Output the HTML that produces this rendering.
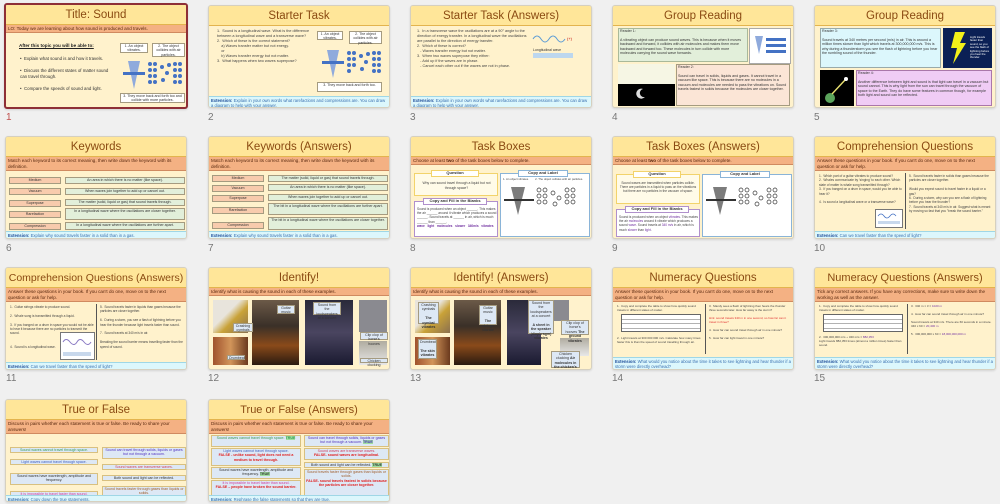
<!DOCTYPE html>
<html><head><meta charset="utf-8"><style>
*{margin:0;padding:0;box-sizing:border-box}
body{width:1000px;height:504px;background:#f0f0f0;font-family:"Liberation Sans",sans-serif;position:relative;overflow:hidden}
.s{position:absolute;width:182px;height:103px;background:#fff2cc;border:1px solid #d6d0bf;border-radius:3px;overflow:hidden;box-shadow:0 1px 2px rgba(0,0,0,.12)}
.sel{border:2px solid #8e2f36}
.t{position:absolute;left:0;top:0;width:100%;height:20px;background:#ffe699;border-bottom:1px solid #e3b44e;color:#8a4a12;font-size:11.5px;text-align:center;line-height:20px}
.sub{position:absolute;left:0;width:100%;background:#f4b183;color:#5a2a10;font-size:4.6px;line-height:5.6px;padding:1px 2px;border-bottom:1px solid #d08a60}
.ext{position:absolute;left:0;bottom:0;width:100%;background:#dcf7fc;border-top:1px solid #9fd7e6;color:#3a70b0;font-size:4.2px;line-height:5px;padding:1px 2px}
.ext b{color:#1f4e9a}
.n{position:absolute;font-size:10px;color:#777}
.tx{position:absolute;font-size:3.8px;line-height:5px;color:#444}
.bx{position:absolute;border:1px solid #a59b80;font-size:3.6px;line-height:4.4px;text-align:center;color:#333;padding:0 1px}
.pk{background:#f8cbad}.gr{background:#e2efda}.bl{background:#dde8f5}
.img{position:absolute}
.dot{position:absolute;width:4px;height:4px;border-radius:50%;background:#4472c4}
</style></head><body>

<!-- Row 1 -->
<div class="s sel" style="left:4px;top:3px;width:184px;height:106px">
 <div class="t" style="height:20px">Title: Sound</div>
 <div class="sub" style="top:20px;height:8px;background:#f4b183">LO: Today we are learning about how sound is produced and travels.</div>
 <div class="tx" style="left:13px;top:38px;font-size:4.6px;font-weight:bold;text-decoration:underline;color:#222">After this topic you will be able to:</div>
 <div class="tx" style="left:14px;top:51px;font-size:4.4px;line-height:6px;width:95px;color:#333">•&nbsp; Explain what sound is and how it travels.<br><br>•&nbsp; Discuss the different states of matter sound can travel through.<br><br>•&nbsp; Compare the speeds of sound and light.</div>
 <div class="bx" style="left:114px;top:38px;width:28px;height:10px;background:#fff">1. An object vibrates.</div>
 <div class="bx" style="left:146px;top:38px;width:33px;height:14px;background:#fff">2. The object collides with air particles.</div>
 <div class="bx" style="left:114px;top:88px;width:65px;height:10px;background:#fff">3. They move back and forth too and collide with more particles.</div>
 <svg class="img" style="left:116px;top:54px" width="64" height="32"><polygon points="6,2 18,2 12,30" fill="#8faadc"/><rect x="1" y="13" width="22" height="3" fill="#4472c4"/>
 <g fill="#4472c4"><circle cx="28" cy="5" r="2"/><circle cx="33" cy="5" r="2"/><circle cx="28" cy="11" r="2"/><circle cx="33" cy="11" r="2"/><circle cx="28" cy="17" r="2"/><circle cx="33" cy="17" r="2"/><circle cx="28" cy="23" r="2"/><circle cx="33" cy="23" r="2"/><circle cx="40" cy="8" r="2"/><circle cx="45" cy="14" r="2"/><circle cx="41" cy="21" r="2"/><circle cx="47" cy="6" r="2"/><circle cx="53" cy="5" r="2"/><circle cx="58" cy="5" r="2"/><circle cx="53" cy="11" r="2"/><circle cx="58" cy="11" r="2"/><circle cx="53" cy="17" r="2"/><circle cx="58" cy="17" r="2"/><circle cx="53" cy="23" r="2"/><circle cx="58" cy="23" r="2"/></g></svg>
</div>
<div class="n" style="left:6px;top:112px;color:#c0504d">1</div>

<div class="s" style="left:208px;top:5px">
 <div class="t">Starter Task</div>
 <div class="tx" style="left:8px;top:23px;width:105px">1.&nbsp; Sound is a longitudinal wave. What is the difference between a longitudinal wave and a transverse wave?<br>2.&nbsp; Which of these is the correct statement?<br>&nbsp;&nbsp;&nbsp;&nbsp;a) Waves transfer matter but not energy.<br>&nbsp;&nbsp;&nbsp;&nbsp;or<br>&nbsp;&nbsp;&nbsp;&nbsp;b) Waves transfer energy but not matter.<br>3.&nbsp; What happens when two waves superpose?</div>
 <div class="bx" style="left:108px;top:25px;width:26px;height:9px;background:#fff">1. An object vibrates.</div>
 <div class="bx" style="left:140px;top:25px;width:33px;height:13px;background:#fff">2. The object collides with air particles.</div>
 <div class="bx" style="left:108px;top:76px;width:65px;height:10px;background:#fff">3. They move back and forth too.</div>
 <svg class="img" style="left:112px;top:42px" width="64" height="32"><polygon points="6,2 18,2 12,30" fill="#8faadc"/><rect x="1" y="13" width="22" height="3" fill="#4472c4"/>
 <g fill="#4472c4"><circle cx="28" cy="5" r="2"/><circle cx="33" cy="5" r="2"/><circle cx="28" cy="11" r="2"/><circle cx="33" cy="11" r="2"/><circle cx="28" cy="17" r="2"/><circle cx="33" cy="17" r="2"/><circle cx="28" cy="23" r="2"/><circle cx="40" cy="8" r="2"/><circle cx="45" cy="14" r="2"/><circle cx="41" cy="21" r="2"/><circle cx="47" cy="6" r="2"/><circle cx="53" cy="5" r="2"/><circle cx="58" cy="5" r="2"/><circle cx="53" cy="11" r="2"/><circle cx="58" cy="11" r="2"/><circle cx="53" cy="17" r="2"/><circle cx="58" cy="17" r="2"/><circle cx="53" cy="23" r="2"/><circle cx="58" cy="23" r="2"/></g></svg>
 <div class="ext" style="height:11px"><b>Extension:</b> Explain in your own words what rarefactions and compressions are. You can draw a diagram to help with your answer.</div>
</div>
<div class="n" style="left:208px;top:112px">2</div>

<div class="s" style="left:410px;top:5px">
 <div class="t">Starter Task (Answers)</div>
 <div class="tx" style="left:6px;top:23px;width:110px">1.&nbsp; In a transverse wave the oscillations are at a 90° angle to the direction of energy transfer. In a longitudinal wave the oscillations are parallel to the direction of energy transfer.<br>2.&nbsp; Which of these is correct?<br>&nbsp;&nbsp;&nbsp;- Waves transfer energy but not matter.<br>3.&nbsp; When two waves superpose they either:<br>&nbsp;&nbsp;&nbsp;- Add up if the waves are in phase.<br>&nbsp;&nbsp;&nbsp;- Cancel each other out if the waves are not in phase.</div>
 <svg class="img" style="left:120px;top:25px" width="58" height="40"><path d="M2 8 q4 -6 8 0 t8 0 t8 0 t8 0" stroke="#5b9bd5" fill="none"/><text x="36" y="9" font-size="4" fill="#c00000">(+)</text><rect x="2" y="22" width="40" height="5" fill="#bdd7ee"/><text x="2" y="20" font-size="3.5" fill="#333">Longitudinal wave</text></svg>
 <div class="ext" style="height:11px"><b>Extension:</b> Explain in your own words what rarefactions and compressions are. You can draw a diagram to help with your answer.</div>
</div>
<div class="n" style="left:410px;top:112px">3</div>

<div class="s" style="left:612px;top:5px">
 <div class="t">Group Reading</div>
 <div class="bx gr" style="left:5px;top:22px;width:130px;height:34px;text-align:left;border-color:#a9b99a">Reader 1:<br><br>A vibrating object can produce sound waves. This is because when it moves backward and forward, it collides with air molecules and makes them move backward and forward too. These molecules in turn collide with more molecules carrying the sound wave forwards.</div>
 <div class="img" style="left:136px;top:22px;width:42px;height:36px;background:#fff;border:1px solid #aaa"></div>
 <svg class="img" style="left:138px;top:30px" width="38" height="20"><polygon points="4,0 12,0 8,18" fill="#8faadc"/><g fill="#4472c4"><rect x="15" y="2" width="20" height="3"/><rect x="15" y="8" width="20" height="3"/><rect x="15" y="14" width="20" height="3"/></g></svg>
 <div class="img" style="left:5px;top:58px;width:57px;height:42px;background:#000"><div style="height:20px;background:#f6f6e4"></div></div>
 <svg class="img" style="left:22px;top:82px" width="12" height="12"><path d="M8 1 A5 5 0 1 0 10 9 A4 4 0 1 1 8 1z" fill="#ddd"/></svg>
 <div class="bx pk" style="left:63px;top:58px;width:114px;height:42px;text-align:left;background:#fbe5d6">Reader 2:<br><br>Sound can travel in solids, liquids and gases. It cannot travel in a vacuum like space. This is because there are no molecules in a vacuum and molecules are needed to pass the vibrations on. Sound travels fastest in solids because the molecules are closer together.</div>
</div>
<div class="n" style="left:612px;top:112px">4</div>

<div class="s" style="left:814px;top:5px">
 <div class="t">Group Reading</div>
 <div class="bx" style="left:5px;top:22px;width:121px;height:40px;text-align:left;background:#dcf7fc;border-color:#9aa">Reader 3:<br><br>Sound travels at 340 metres per second (m/s) in air. This is around a million times slower than light which travels at 300,000,000 m/s. This is why during a thunderstorm you see the flash of lightning before you hear the rumbling sound of the thunder.</div>
 <div class="img" style="left:128px;top:22px;width:49px;height:40px;background:#0b2055"></div>
 <svg class="img" style="left:134px;top:26px" width="20" height="32"><polygon points="6,0 16,0 11,11 17,11 4,32 8,16 2,16" fill="#f3f019"/></svg>
 <div class="tx" style="left:155px;top:30px;width:20px;font-size:2.8px;line-height:3.4px;color:#fff">Light travels faster than sound, so you see the flash of lightning before you hear the thunder.</div>
 <div class="img" style="left:5px;top:64px;width:34px;height:36px;background:#000"></div>
 <svg class="img" style="left:8px;top:68px" width="30" height="30"><circle cx="7" cy="24" r="5" fill="#5ba35b"/><line x1="9" y1="20" x2="22" y2="6" stroke="#e8e070" stroke-width="1.4"/><circle cx="23" cy="5" r="2" fill="#fff"/></svg>
 <div class="bx" style="left:41px;top:64px;width:136px;height:36px;text-align:left;background:#f0ccf5;border-color:#a7a">Reader 4:<br><br>Another difference between light and sound is that light can travel in a vacuum but sound cannot. This is why light from the sun can travel through the vacuum of space to the Earth. They do have some features in common though, for example both light and sound can be reflected.</div>
</div>
<div class="n" style="left:814px;top:112px">5</div>

<!-- Row 2 -->
<div class="s" style="left:5px;top:136px">
 <div class="t">Keywords</div>
 <div class="sub" style="top:20px;height:14px">Match each keyword to its correct meaning, then write down the keyword with its definition.</div>
 <div class="bx pk" style="left:3px;top:40px;width:52px;height:7px">Medium</div>
 <div class="bx pk" style="left:3px;top:51px;width:52px;height:7px">Vacuum</div>
 <div class="bx pk" style="left:3px;top:63px;width:52px;height:7px">Superpose</div>
 <div class="bx pk" style="left:3px;top:74px;width:52px;height:7px">Rarefaction</div>
 <div class="bx pk" style="left:3px;top:86px;width:52px;height:7px">Compression</div>
 <div class="bx gr" style="left:59px;top:40px;width:120px;height:7px">An area in which there is no matter (like space).</div>
 <div class="bx gr" style="left:59px;top:51px;width:120px;height:7px">When waves join together to add up or cancel out.</div>
 <div class="bx gr" style="left:59px;top:62px;width:120px;height:7px">The matter (solid, liquid or gas) that sound travels through.</div>
 <div class="bx gr" style="left:59px;top:71px;width:120px;height:12px">In a longitudinal wave where the oscillations are closer together.</div>
 <div class="bx gr" style="left:59px;top:85px;width:120px;height:8px">In a longitudinal wave where the oscillations are further apart.</div>
 <div class="ext" style="height:7px"><b>Extension:</b> Explain why sound travels faster in a solid than in a gas.</div>
</div>
<div class="n" style="left:6px;top:243px">6</div>

<div class="s" style="left:208px;top:136px">
 <div class="t">Keywords (Answers)</div>
 <div class="sub" style="top:20px;height:14px">Match each keyword to its correct meaning, then write down the keyword with its definition.</div>
 <div class="bx pk" style="left:3px;top:38px;width:52px;height:7px">Medium</div>
 <div class="bx pk" style="left:3px;top:48px;width:52px;height:7px">Vacuum</div>
 <div class="bx pk" style="left:3px;top:58px;width:52px;height:7px">Superpose</div>
 <div class="bx pk" style="left:3px;top:70px;width:52px;height:7px">Rarefaction</div>
 <div class="bx pk" style="left:3px;top:85px;width:52px;height:7px">Compression</div>
 <div class="bx gr" style="left:59px;top:38px;width:120px;height:7px">The matter (solid, liquid or gas) that sound travels through.</div>
 <div class="bx gr" style="left:59px;top:47px;width:120px;height:7px">An area in which there is no matter (like space).</div>
 <div class="bx gr" style="left:59px;top:57px;width:120px;height:7px">When waves join together to add up or cancel out.</div>
 <div class="bx gr" style="left:59px;top:66px;width:120px;height:12px">The bit in a longitudinal wave where the oscillations are further apart.</div>
 <div class="bx gr" style="left:59px;top:80px;width:120px;height:13px">The bit in a longitudinal wave where the oscillations are closer together.</div>
 <div class="ext" style="height:7px"><b>Extension:</b> Explain why sound travels faster in a solid than in a gas.</div>
</div>
<div class="n" style="left:208px;top:243px">7</div>

<div class="s" style="left:410px;top:136px">
 <div class="t">Task Boxes</div>
 <div class="sub" style="top:20px;height:8px">Choose at least <b>two</b> of the task boxes below to complete.</div>
 <div class="img" style="left:3px;top:36px;width:84px;height:23px;border:1px solid #f2d36b;background:#fffbe8"></div>
 <div class="bx" style="left:20px;top:33px;width:48px;height:7px;background:#fff;border-color:#f2d36b;font-weight:bold;font-size:4px">Question</div>
 <div class="tx" style="left:8px;top:44px;width:75px;text-align:center;font-size:3.4px">Why can sound travel through a liquid but not through space?</div>
 <div class="img" style="left:3px;top:64px;width:84px;height:36px;border:1px solid #b090cc;background:#fff"></div>
 <div class="bx" style="left:12px;top:61px;width:64px;height:7px;background:#fff;border-color:#b090cc;font-weight:bold;font-size:4px">Copy and Fill in the Blanks</div>
 <div class="tx" style="left:6px;top:70px;width:80px;font-size:3.2px;line-height:4.2px">Sound is produced when an object ______. This makes the air ______ around it vibrate which produces a sound ______. Sound travels at ______ in air, which is much ______ than ______.<br><span style="color:#7030a0;font-weight:bold">wave &nbsp; light &nbsp; molecules &nbsp; slower &nbsp; 340m/s &nbsp; vibrates</span></div>
 <div class="img" style="left:89px;top:36px;width:90px;height:64px;border:1px solid #8ab4d8;background:#fff"></div>
 <div class="bx" style="left:107px;top:33px;width:50px;height:7px;background:#fff;border-color:#8ab4d8;font-weight:bold;font-size:4px">Copy and Label</div>
 <svg class="img" style="left:92px;top:48px" width="84" height="40"><polygon points="8,2 22,2 15,30" fill="#444" opacity=".7"/><rect x="1" y="14" width="30" height="2" fill="#333"/><g fill="none" stroke="#333" stroke-width=".7"><circle cx="36" cy="5" r="2"/><circle cx="42" cy="5" r="2"/><circle cx="36" cy="11" r="2"/><circle cx="42" cy="11" r="2"/><circle cx="36" cy="17" r="2"/><circle cx="42" cy="17" r="2"/><circle cx="50" cy="8" r="2"/><circle cx="56" cy="13" r="2"/><circle cx="52" cy="19" r="2"/><circle cx="64" cy="5" r="2"/><circle cx="70" cy="5" r="2"/><circle cx="64" cy="11" r="2"/><circle cx="70" cy="11" r="2"/><circle cx="64" cy="17" r="2"/><circle cx="70" cy="17" r="2"/></g></svg>
 <div class="tx" style="left:92px;top:40px;font-size:2.8px;width:84px">1. An object vibrates. &nbsp;&nbsp;&nbsp;&nbsp;&nbsp;&nbsp; 2. The object collides with air particles.</div>
</div>
<div class="n" style="left:410px;top:243px">8</div>

<div class="s" style="left:612px;top:136px">
 <div class="t">Task Boxes (Answers)</div>
 <div class="sub" style="top:20px;height:8px">Choose at least <b>two</b> of the task boxes below to complete.</div>
 <div class="img" style="left:3px;top:37px;width:84px;height:30px;border:1px solid #f2d36b;background:#fffbe8"></div>
 <div class="bx" style="left:20px;top:34px;width:48px;height:7px;background:#fff;border-color:#f2d36b;font-weight:bold;font-size:4px">Question</div>
 <div class="tx" style="left:6px;top:44px;width:78px;text-align:center;font-size:3.2px;line-height:4.2px">Sound waves are transmitted when particles collide. There are particles in a liquid to pass on the vibrations but there are no particles in the vacuum of space.</div>
 <div class="img" style="left:3px;top:72px;width:84px;height:28px;border:1px solid #b090cc;background:#fff"></div>
 <div class="bx" style="left:12px;top:69px;width:64px;height:7px;background:#fff;border-color:#b090cc;font-weight:bold;font-size:4px">Copy and Fill in the Blanks</div>
 <div class="tx" style="left:6px;top:78px;width:80px;font-size:3.2px;line-height:4.2px">Sound is produced when an object <span style="color:#7030a0">vibrates</span>. This makes the air <span style="color:#7030a0">molecules</span> around it vibrate which produces a sound <span style="color:#7030a0">wave</span>. Sound travels at <span style="color:#7030a0">340 m/s</span> in air, which is much <span style="color:#7030a0">slower</span> than <span style="color:#7030a0">light</span>.</div>
 <div class="img" style="left:89px;top:37px;width:90px;height:63px;border:1px solid #8ab4d8;background:#fff"></div>
 <div class="bx" style="left:107px;top:34px;width:50px;height:7px;background:#fff;border-color:#8ab4d8;font-weight:bold;font-size:4px">Copy and Label</div>
 <svg class="img" style="left:92px;top:48px" width="84" height="40"><polygon points="8,2 22,2 15,30" fill="#444" opacity=".7"/><rect x="1" y="14" width="30" height="2" fill="#333"/><g fill="none" stroke="#333" stroke-width=".7"><circle cx="36" cy="5" r="2"/><circle cx="42" cy="5" r="2"/><circle cx="36" cy="11" r="2"/><circle cx="42" cy="11" r="2"/><circle cx="36" cy="17" r="2"/><circle cx="42" cy="17" r="2"/><circle cx="50" cy="8" r="2"/><circle cx="56" cy="13" r="2"/><circle cx="52" cy="19" r="2"/><circle cx="64" cy="5" r="2"/><circle cx="70" cy="5" r="2"/><circle cx="64" cy="11" r="2"/><circle cx="70" cy="11" r="2"/><circle cx="64" cy="17" r="2"/><circle cx="70" cy="17" r="2"/></g></svg>
</div>
<div class="n" style="left:612px;top:243px">9</div>

<div class="s" style="left:814px;top:136px">
 <div class="t">Comprehension Questions</div>
 <div class="sub" style="top:20px;height:14px">Answer these questions in your book. If you can't do one, move on to the next question or ask for help.</div>
 <div class="tx" style="left:4px;top:37px;width:85px;font-size:3.2px;line-height:4.4px">1.&nbsp; Which part of a guitar vibrates to produce sound?<br>2.&nbsp; Whales communicate by 'singing' to each other. Which state of matter is whale song transmitted through?<br>3.&nbsp; If you banged on a drum in space, would you be able to hear it?<br><br>4.&nbsp; Is sound a longitudinal wave or a transverse wave?</div>
 <div class="img" style="left:90px;top:36px;width:1px;height:56px;background:#555"></div>
 <div class="bx" style="left:60px;top:72px;width:28px;height:19px;background:#fff;border-color:#777"></div>
 <svg class="img" style="left:62px;top:75px" width="24" height="14"><path d="M1 4 q3 -4 6 0 t6 0 t6 0" stroke="#4472c4" fill="none" stroke-width=".8"/><rect x="1" y="9" width="22" height="3" fill="#c8d8ec"/></svg>
 <div class="tx" style="left:94px;top:37px;width:84px;font-size:3.2px;line-height:4.4px">5.&nbsp; Sound travels faster in solids than gases because the particles are closer together.<br><br>Would you expect sound to travel faster in a liquid or a gas?<br>6.&nbsp; During a storm, why can you see a flash of lightning before you hear the thunder?<br>7.&nbsp; Sound travels at 340 m/s in air. Suggest what is meant by moving so fast that you "break the sound barrier."</div>
 <div class="ext" style="height:7px"><b>Extension:</b> Can we travel faster than the speed of light?</div>
</div>
<div class="n" style="left:814px;top:243px">10</div>

<!-- Row 3 -->
<div class="s" style="left:5px;top:267px">
 <div class="t" style="font-size:10.5px">Comprehension Questions (Answers)</div>
 <div class="sub" style="top:20px;height:14px">Answer these questions in your book. If you can't do one, move on to the next question or ask for help.</div>
 <div class="tx" style="left:4px;top:37px;width:85px;font-size:3.2px;line-height:4.4px">1.&nbsp; Guitar strings vibrate to produce sound.<br><br>2.&nbsp; Whale song is transmitted through a liquid.<br><br>3.&nbsp; If you banged on a drum in space you would not be able to hear it because there are no particles to transmit the sound.<br><br><br>4.&nbsp; Sound is a longitudinal wave.</div>
 <div class="img" style="left:90px;top:36px;width:1px;height:56px;background:#555"></div>
 <div class="bx" style="left:54px;top:64px;width:35px;height:28px;background:#fff;border-color:#777"></div>
 <svg class="img" style="left:56px;top:68px" width="30" height="22"><path d="M1 6 q3 -5 7 0 t7 0 t7 0 t7 0" stroke="#8a7ac4" fill="none"/><rect x="1" y="16" width="28" height="4" fill="#c8d8ec"/></svg>
 <div class="tx" style="left:94px;top:37px;width:84px;font-size:3.2px;line-height:4.4px">5.&nbsp; Sound travels faster in liquids than gases because the particles are closer together.<br><br>6.&nbsp; During a storm, you see a flash of lightning before you hear the thunder because light travels faster than sound.<br><br>7.&nbsp; Sound travels at 340 m/s in air.<br><br>Breaking the sound barrier means travelling faster than the speed of sound.</div>
 <div class="ext" style="height:7px"><b>Extension:</b> Can we travel faster than the speed of light?</div>
</div>
<div class="n" style="left:6px;top:373px">11</div>

<div class="s" style="left:208px;top:267px">
 <div class="t">Identify!</div>
 <div class="sub" style="top:20px;height:8px">Identify what is causing the sound in each of these examples.</div>
 <div class="img" style="left:4px;top:32px;width:35px;height:33px;background:linear-gradient(135deg,#e8e4dc 40%,#c9a238 60%,#8a7050)"></div>
 <div class="img" style="left:4px;top:69px;width:35px;height:28px;background:linear-gradient(90deg,#a0522d,#d2955a,#6b3a1e);"></div>
 <div class="img" style="left:43px;top:32px;width:47px;height:65px;background:linear-gradient(180deg,#6c5a48 0%,#3a3028 40%,#8a4a1a 70%,#2a1a10)"></div>
 <div class="img" style="left:96px;top:32px;width:48px;height:65px;background:linear-gradient(180deg,#2a2a3a,#4a4560 50%,#1a1a30)"></div>
 <div class="img" style="left:150px;top:32px;width:28px;height:32px;background:#8a8a90"></div>
 <div class="img" style="left:150px;top:73px;width:28px;height:24px;background:linear-gradient(#b0aca0,#e8e8e8)"></div>
 <div class="bx bl" style="left:24px;top:55px;width:20px;height:9px">Crashing cymbals</div>
 <div class="bx bl" style="left:18px;top:87px;width:18px;height:5px">Drumbeat</div>
 <div class="bx bl" style="left:68px;top:37px;width:18px;height:9px">Guitar music</div>
 <div class="bx bl" style="left:104px;top:34px;width:28px;height:13px">Sound from the loudspeakers at a concert</div>
 <div class="bx bl" style="left:151px;top:64px;width:28px;height:8px">Clip clop of horse's hooves</div>
 <div class="bx bl" style="left:151px;top:90px;width:28px;height:5px">Chicken clucking</div>
</div>
<div class="n" style="left:208px;top:373px">12</div>

<div class="s" style="left:410px;top:267px">
 <div class="t">Identify! (Answers)</div>
 <div class="sub" style="top:20px;height:8px">Identify what is causing the sound in each of these examples.</div>
 <div class="img" style="left:4px;top:32px;width:35px;height:33px;background:linear-gradient(135deg,#e8e4dc 40%,#c9a238 60%,#8a7050)"></div>
 <div class="img" style="left:4px;top:69px;width:35px;height:28px;background:linear-gradient(90deg,#a0522d,#d2955a,#6b3a1e)"></div>
 <div class="img" style="left:43px;top:32px;width:47px;height:65px;background:linear-gradient(180deg,#6c5a48 0%,#3a3028 40%,#8a4a1a 70%,#2a1a10)"></div>
 <div class="img" style="left:96px;top:32px;width:34px;height:65px;background:linear-gradient(180deg,#2a2a3a,#4a4560 50%,#1a1a30)"></div>
 <div class="img" style="left:139px;top:32px;width:19px;height:21px;background:#8a8a90"></div>
 <div class="img" style="left:149px;top:70px;width:29px;height:18px;background:linear-gradient(#b0aca0,#e8e8e8)"></div>
 <div class="bx bl" style="left:7px;top:34px;width:21px;height:22px">Crashing cymbals<br><br><b>The cymbal vibrates</b></div>
 <div class="bx bl" style="left:7px;top:71px;width:19px;height:20px">Drumbeat<br><br><b>The skin vibrates</b></div>
 <div class="bx bl" style="left:68px;top:37px;width:18px;height:20px">Guitar music<br><br><b>The strings vibrate</b></div>
 <div class="bx bl" style="left:117px;top:32px;width:26px;height:34px">Sound from the loudspeakers at a concert<br><br><b>A sheet in the speaker (diaphragm) vibrates</b></div>
 <div class="bx bl" style="left:150px;top:52px;width:28px;height:15px">Clip clop of horse's hooves <b>The ground vibrates</b></div>
 <div class="bx bl" style="left:140px;top:83px;width:29px;height:17px">Chicken clucking <b>Air molecules in the chicken's throat vibrate</b></div>
</div>
<div class="n" style="left:410px;top:373px">13</div>

<div class="s" style="left:612px;top:267px">
 <div class="t">Numeracy Questions</div>
 <div class="sub" style="top:20px;height:14px">Answer these questions in your book. If you can't do one, move on to the next question or ask for help.</div>
 <div class="tx" style="left:4px;top:36px;width:85px;font-size:3px;line-height:4px">1.&nbsp; Copy and complete the table to show how quickly sound travels in different states of matter.</div>
 <div class="img" style="left:8px;top:46px;width:80px;height:18px;border:1px solid #666;background:repeating-linear-gradient(#fff 0 4px,#666 4px 4.5px)"></div>
 <div class="tx" style="left:4px;top:68px;width:85px;font-size:3px;line-height:4px">2.&nbsp; Light travels at 300 000 000 m/s. Calculate how many times faster this is than the speed of sound travelling through air.</div>
 <div class="img" style="left:92px;top:36px;width:1px;height:50px;background:#555"></div>
 <div class="tx" style="left:96px;top:36px;width:82px;font-size:3px;line-height:4px">3.&nbsp; Mandy sees a flash of lightning then hears the thunder three seconds later. How far away is the storm?<br><br><span style="color:#e03030">Hint: sound travels 340 m in one second, so how far can it travel in three?</span><br><br>4.&nbsp; How far can sound travel through air in one minute?<br><br>5.&nbsp; How far can light travel in one minute?</div>
 <div class="ext" style="height:12px"><b>Extension:</b> What would you notice about the time it takes to see lightning and hear thunder if a storm were directly overhead?</div>
</div>
<div class="n" style="left:612px;top:373px">14</div>

<div class="s" style="left:814px;top:267px">
 <div class="t" style="font-size:11px">Numeracy Questions (Answers)</div>
 <div class="sub" style="top:20px;height:14px">Tick any correct answers. If you have any corrections, make sure to write down the working as well as the answer.</div>
 <div class="tx" style="left:4px;top:36px;width:85px;font-size:3px;line-height:4px">1.&nbsp; Copy and complete the table to show how quickly sound travels in different states of matter.</div>
 <div class="img" style="left:8px;top:46px;width:80px;height:18px;border:1px solid #666;background:repeating-linear-gradient(#fff 0 4px,#666 4px 4.5px)"></div>
 <div class="tx" style="left:4px;top:67px;width:85px;font-size:3px;line-height:4px">2.&nbsp; 300,000,000 m/s ÷ 340 m/s = <span style="color:#7030a0">882,353</span><br>Light travels 882,353 times (almost a million times) faster than sound.</div>
 <div class="img" style="left:92px;top:36px;width:1px;height:50px;background:#555"></div>
 <div class="tx" style="left:96px;top:36px;width:82px;font-size:3px;line-height:4px">3.&nbsp; 340 m × 3 = <span style="color:#7030a0">1020 m</span><br><br>4.&nbsp; How far can sound travel through air in one minute?<br><br>Sound travels at 340 m/s. There are 60 seconds in a minute. 340 x 60 = <span style="color:#7030a0">20,400 m</span><br><br>5.&nbsp; 300,000,000 x 60 = <span style="color:#7030a0">18,000,000,000 m</span></div>
 <div class="ext" style="height:12px"><b>Extension:</b> What would you notice about the time it takes to see lightning and hear thunder if a storm were directly overhead?</div>
</div>
<div class="n" style="left:814px;top:373px">15</div>

<!-- Row 4 -->
<div class="s" style="left:5px;top:399px">
 <div class="t">True or False</div>
 <div class="sub" style="top:20px;height:14px">Discuss in pairs whether each statement is true or false. Be ready to share your answers!</div>
 <div class="bx bl" style="left:4px;top:47px;width:88px;height:6px;color:#3a9a5a;border-color:#d8c080">Sound waves cannot travel through space.</div>
 <div class="bx bl" style="left:4px;top:59px;width:88px;height:6px;color:#4060c0;border-color:#d8c080">Light waves cannot travel through space.</div>
 <div class="bx bl" style="left:4px;top:73px;width:88px;height:12px;color:#333;border-color:#d8c080">Sound waves have wavelength, amplitude and frequency.</div>
 <div class="bx bl" style="left:4px;top:91px;width:88px;height:6px;color:#d040a0;border-color:#d8c080">It is impossible to travel faster than sound.</div>
 <div class="bx bl" style="left:96px;top:47px;width:84px;height:12px;color:#5030c0;border-color:#d8c080">Sound can travel through solids, liquids or gases but not through a vacuum.</div>
 <div class="bx bl" style="left:96px;top:64px;width:84px;height:6px;color:#d04060;border-color:#d8c080">Sound waves are transverse waves.</div>
 <div class="bx bl" style="left:96px;top:75px;width:84px;height:6px;color:#333;border-color:#d8c080">Both sound and light can be reflected.</div>
 <div class="bx bl" style="left:96px;top:86px;width:84px;height:12px;color:#a06030;border-color:#d8c080">Sound travels faster through gases than liquids or solids.</div>
 <div class="ext" style="height:6px"><b style="color:#3a70b0">Extension:</b> Copy down the true statements.</div>
</div>

<div class="s" style="left:208px;top:399px">
 <div class="t" style="font-size:11px">True or False (Answers)</div>
 <div class="sub" style="top:20px;height:14px">Discuss in pairs whether each statement is true or false. Be ready to share your answers!</div>
 <div class="bx bl" style="left:2px;top:35px;width:90px;height:12px;color:#3a9a5a;border-color:#d8c080">Sound waves cannot travel through space. <b style="background:#9fe0a0">TRUE</b></div>
 <div class="bx bl" style="left:2px;top:48px;width:90px;height:18px;color:#4060c0;border-color:#d8c080">Light waves cannot travel through space.<br><b style="color:#e02020">FALSE - unlike sound, light does not need a medium to travel through.</b></div>
 <div class="bx bl" style="left:2px;top:67px;width:90px;height:12px;color:#333;border-color:#d8c080">Sound waves have wavelength, amplitude and frequency. <b style="background:#9fe0a0">TRUE</b></div>
 <div class="bx bl" style="left:2px;top:80px;width:90px;height:17px;color:#d040a0;border-color:#d8c080">It is impossible to travel faster than sound.<br><b style="color:#e02020">FALSE – people have broken the sound barrier.</b></div>
 <div class="bx bl" style="left:95px;top:35px;width:85px;height:12px;color:#5030c0;border-color:#d8c080">Sound can travel through solids, liquids or gases but not through a vacuum. <b style="background:#9fe0a0">TRUE</b></div>
 <div class="bx bl" style="left:95px;top:48px;width:85px;height:12px;color:#d04060;border-color:#d8c080">Sound waves are transverse waves.<br><b style="color:#e02020">FALSE- sound waves are longitudinal.</b></div>
 <div class="bx bl" style="left:95px;top:62px;width:85px;height:6px;color:#333;border-color:#d8c080">Both sound and light can be reflected. <b style="background:#9fe0a0">TRUE</b></div>
 <div class="bx bl" style="left:95px;top:69px;width:85px;height:28px;color:#a06030;border-color:#d8c080">Sound travels faster through gases than liquids or solids.<br><b style="color:#e02020">FALSE- sound travels fastest in solids because the particles are closer together.</b></div>
 <div class="ext" style="height:6px"><b style="color:#3a70b0">Extension:</b> Rephrase the false statements so that they are true.</div>
</div>

</body></html>
